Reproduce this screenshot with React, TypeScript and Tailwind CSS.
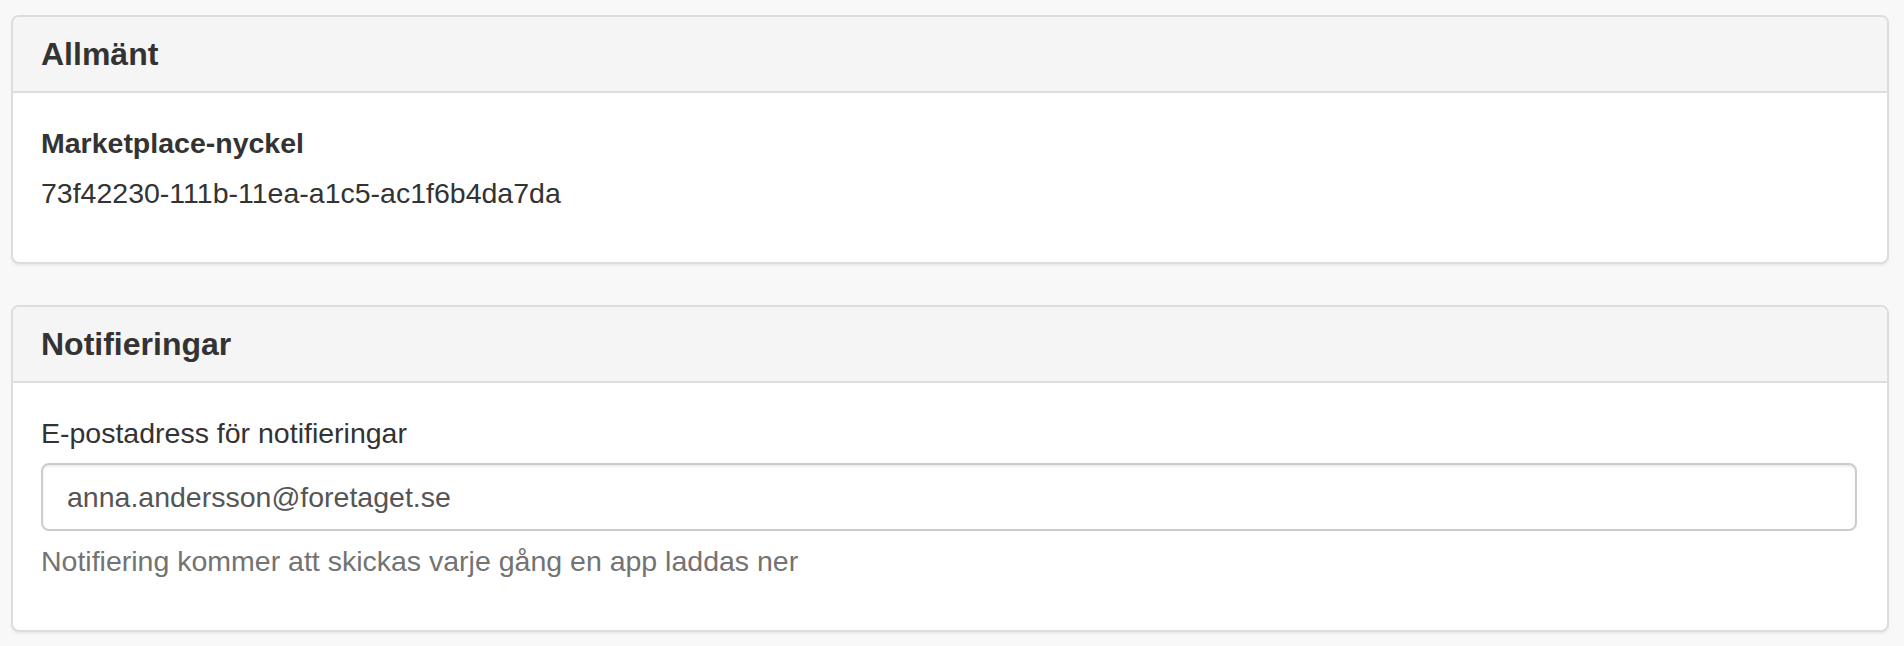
import React from 'react';

const Panel = ({ title, children }: { title: string; children: React.ReactNode }) => (
  <section className="rounded-[8px] border-2 border-[#dddddd] bg-white shadow-[0_2px_2px_rgba(0,0,0,0.05)]">
    <header className="h-[76px] rounded-t-[6px] border-b-2 border-[#dddddd] bg-[#f5f5f5] px-[28px] flex items-center">
      <h3 className="text-[32px] font-bold leading-[35px] text-[#333333]">{title}</h3>
    </header>
    <div className="px-[28px] pt-[30px] pb-[29px]">{children}</div>
  </section>
);

const App = () => {
  return (
    <div
      className="min-h-[646px] bg-[#f8f8f8] px-[11px] pt-[15px] text-[28.5px] leading-[40px] text-[#333333]"
      style={{ fontFamily: '"Liberation Sans", Arial, sans-serif' }}
    >
      <div className="flex w-[1878px] flex-col gap-[41px]">
        <Panel title="Allmänt">
          <div className="mb-[20px]">
            <div className="mb-[10px] font-bold">Marketplace-nyckel</div>
            <div>73f42230-111b-11ea-a1c5-ac1f6b4da7da</div>
          </div>
        </Panel>

        <Panel title="Notifieringar">
          <div className="mb-[20px]">
            <label className="mb-[10px] block">E-postadress för notifieringar</label>
            <input
              type="email"
              defaultValue="anna.andersson@foretaget.se"
              className="block h-[68px] w-[1816px] rounded-[8px] border-2 border-[#cccccc] bg-white px-[24px] text-[28.5px] text-[#555555] shadow-[inset_0_2px_2px_rgba(0,0,0,0.075)] outline-none"
              style={{ fontFamily: '"Liberation Sans", Arial, sans-serif' }}
            />
            <p className="mt-[10px] text-[#737373]">Notifiering kommer att skickas varje gång en app laddas ner</p>
          </div>
        </Panel>
      </div>
    </div>
  );
};

export default App;
